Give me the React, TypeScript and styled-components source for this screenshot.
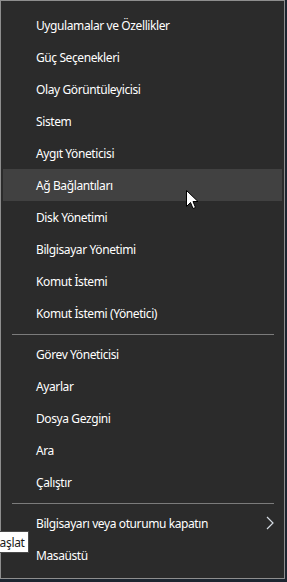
import React from "react";
import styled, { createGlobalStyle } from "styled-components";

const Global = createGlobalStyle`
  html, body {
    margin: 0;
    padding: 0;
    background: #9a9a9a;
    width: 287px;
    height: 582px;
    overflow: hidden;
  }
`;

const Frame = styled.div`
  position: relative;
  width: 287px;
  height: 582px;
  background: #1c2530;
`;

const Menu = styled.div`
  box-sizing: border-box;
  width: 285px;
  height: 579px;
  border: 1px solid #8e8e8e;
  background: #2b2b2b;
  padding: 8px 2px 0 2px;
  display: flex;
  flex-direction: column;
  font-family: "Noto Sans", "Open Sans", sans-serif;
`;

const Item = styled.div<{ $active?: boolean }>`
  height: 32px;
  display: flex;
  align-items: center;
  padding-left: 33px;
  padding-right: 8px;
  color: #ffffff;
  font-size: 12px;
  letter-spacing: -0.4px;
  background: ${(p) => (p.$active ? "#414141" : "transparent")};
`;

const Label = styled.span`
  flex: 1;
`;

const Separator = styled.div`
  height: 1px;
  background: #7b7b7b;
  margin: 5px 8px 3px 9px;
`;

const Tooltip = styled.div`
  position: absolute;
  left: -13px;
  top: 531px;
  height: 20px;
  padding: 0 3px 0 4px;
  display: flex;
  align-items: center;
  background: #ffffff;
  border: 1px solid #4a4a4a;
  color: #1a1a1a;
  font-family: "Noto Sans", sans-serif;
  font-size: 12px;
  letter-spacing: -0.3px;
`;

const Pointer = styled.svg`
  position: absolute;
  left: 186px;
  top: 190px;
`;

const groups = [
  [
    "Uygulamalar ve Özellikler",
    "Güç Seçenekleri",
    "Olay Görüntüleyicisi",
    "Sistem",
    "Aygıt Yöneticisi",
    "Ağ Bağlantıları",
    "Disk Yönetimi",
    "Bilgisayar Yönetimi",
    "Komut İstemi",
    "Komut İstemi (Yönetici)",
  ],
  ["Görev Yöneticisi", "Ayarlar", "Dosya Gezgini", "Ara", "Çalıştır"],
];

function Chevron() {
  return (
    <svg width="8" height="14" viewBox="0 0 8 14">
      <path d="M1 1 L7 7 L1 13" fill="none" stroke="#d4dbe2" strokeWidth="1.2" />
    </svg>
  );
}

export default function App() {
  return (
    <Frame>
      <Global />
      <Menu>
        {groups.map((g, gi) => (
          <React.Fragment key={gi}>
            {g.map((t) => (
              <Item key={t} $active={t === "Ağ Bağlantıları"}>
                <Label>{t}</Label>
              </Item>
            ))}
            <Separator />
          </React.Fragment>
        ))}
        <Item>
          <Label>Bilgisayarı veya oturumu kapatın</Label>
          <Chevron />
        </Item>
        <Item>
          <Label>Masaüstü</Label>
        </Item>
      </Menu>
      <Tooltip>Başlat</Tooltip>
      <Pointer width="13" height="20" viewBox="0 0 13 20">
        <path
          d="M0.5 0.5 L0.5 16.5 L4.5 12.5 L7 18.5 L9.5 17.5 L7 11.5 L12 11.5 Z"
          fill="#ffffff"
          stroke="#000000"
          strokeWidth="1"
        />
      </Pointer>
    </Frame>
  );
}
